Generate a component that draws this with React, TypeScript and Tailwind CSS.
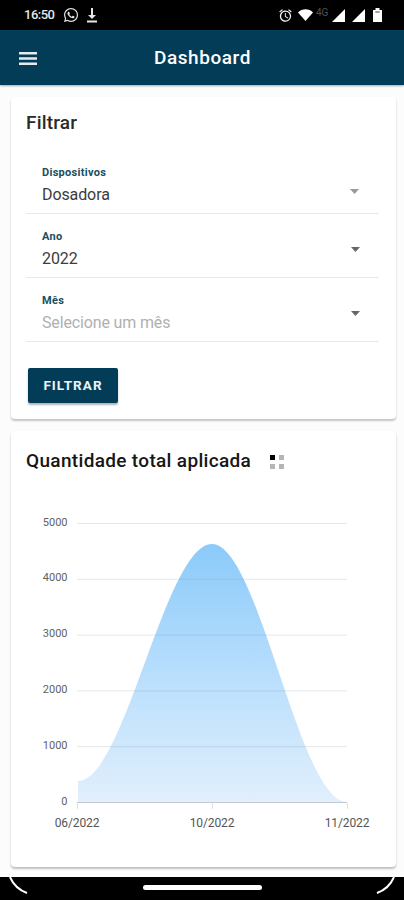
import { FaWhatsapp } from "react-icons/fa";
import { MdAlarm } from "react-icons/md";

const filters = [
    { label: "Dispositivos", value: "Dosadora", placeholder: false, disabled: true },
    { label: "Ano", value: "2022", placeholder: false, disabled: false },
    { label: "Mês", value: "Selecione um mês", placeholder: true, disabled: false },
];

const yTicks = [5000, 4000, 3000, 2000, 1000, 0];

const xTicks = [
    { label: "06/2022", x: 66 },
    { label: "10/2022", x: 201 },
    { label: "11/2022", x: 336 },
];

function StatusBar() {
    return (
        <div className="flex h-[30px] shrink-0 items-center bg-black pl-6 pr-[22px] text-white">
            <span className="w-[31px] whitespace-nowrap text-[13px] font-medium leading-4 tracking-[-0.5px] text-gray-200">16:50</span>
            <FaWhatsapp className="ml-2 size-4 text-gray-200" />
            <svg className="ml-[7px] h-4 w-3 text-gray-200" viewBox="0 0 12 16" fill="currentColor">
                <path d="M5 1h2v7h3l-4 4-4-4h3zM1 13.5h10v2H1z" />
            </svg>
            <div className="ml-auto flex items-center">
                <MdAlarm className="size-[15px] text-gray-100" />
                <svg className="ml-[5px] h-3 w-[15px]" viewBox="0 0 15 12" fill="white">
                    <path d="M0 3.5C4 -.8 11 -.8 15 3.5L7.5 12z" />
                </svg>
                <span className="ml-[3px] -mt-1 w-[15px] text-[10px] leading-3 text-neutral-600">4G</span>
                <svg className="ml-px h-[13px] w-[13px]" viewBox="0 0 13 13" fill="white">
                    <path d="M13 0v13H0z" />
                </svg>
                <svg className="ml-[7px] h-[13px] w-[13px]" viewBox="0 0 13 13" fill="white">
                    <path d="M13 0v13H0z" />
                </svg>
                <svg className="ml-2 h-[14px] w-[9px]" viewBox="0 0 9 14" fill="white">
                    <path d="M2.5 0h4v2H9v12H0V2h2.5z" />
                    <path d="M2.3 4h4.4" stroke="#444" />
                </svg>
            </div>
        </div>
    );
}

function FilterField({ label, value, placeholder, disabled }: (typeof filters)[number]) {
    return (
        <div className="flex h-16 items-center justify-between border-b border-[#e8e8e8] pl-4 pr-[19px]">
            <div className="pt-2">
                <div className="text-[11px] font-bold leading-[14px] tracking-[0.3px] text-[#174f61]">{label}</div>
                <div
                    className={
                        placeholder
                            ? "mt-[5px] text-[16px] leading-5 tracking-[-0.15px] text-[#b0b0b0]"
                            : "mt-[5px] text-[16px] leading-5 tracking-[-0.1px] text-[#3c3c3c]"
                    }
                >
                    {value}
                </div>
            </div>
            <svg
                className={disabled ? "mr-px mt-[19px] h-[5px] w-[9px] text-[#999]" : "mt-2 h-[5px] w-[9px] text-[#666]"}
                viewBox="0 0 10 5"
                preserveAspectRatio="none"
                fill="currentColor"
            >
                <path d="M0 0h10L5 5z" />
            </svg>
        </div>
    );
}

function AreaChart() {
    return (
        <svg className="block h-[385px] w-[385px]" viewBox="0 0 385 385">
            <defs>
                <linearGradient id="area" x1="0" y1="0" x2="0" y2="1">
                    <stop offset="0%" stopColor="#8bcafa" />
                    <stop offset="55%" stopColor="#bce0fd" />
                    <stop offset="100%" stopColor="#e1effc" />
                </linearGradient>
            </defs>
            <path d="M67 299C114 299 154 62 201 62C248 62 288 320 336 320H67z" fill="url(#area)" />
            {yTicks.map((tick, i) => (
                <g key={tick}>
                    <path
                        d={`M66 ${41.5 + i * 55.8}H336`}
                        stroke={tick === 0 ? "#c3c9cf" : "#7b8894"}
                        strokeOpacity={tick === 0 ? 1 : 0.2}
                    />
                    <text x="56.5" y={43.5 + i * 55.8} textAnchor="end" fontSize="11" fill="#626262">
                        {tick}
                    </text>
                </g>
            ))}
            {xTicks.map((tick) => (
                <g key={tick.label}>
                    <path d={`M${tick.x + 0.5} 321v6`} stroke="#dde1e5" />
                    <text x={tick.x} y="345" textAnchor="middle" fontSize="12" letterSpacing="-0.1" fill="#555">
                        {tick.label}
                    </text>
                </g>
            ))}
        </svg>
    );
}

export default function App() {
    return (
        <div className="flex h-[900px] w-[404px] flex-col overflow-hidden bg-[#fcfcfc] font-['Roboto',sans-serif]">
            <StatusBar />

            <header className="grid h-[55px] shrink-0 grid-cols-[1fr_auto_1fr] items-center bg-[#033c57] px-[19px] shadow-[0_1px_2px_rgba(0,0,0,0.35)]">
                <svg className="mt-0.5 h-[13px] w-[18px]" viewBox="0 0 18 13" fill="#e6eaed">
                    <path d="M0 0h18v2.5H0zM0 5.2h18v2.5H0zM0 10.4h18v2.5H0z" />
                </svg>
                <h1 className="pl-px text-[19px] font-medium leading-6 tracking-[0.55px] text-white">Dashboard</h1>
            </header>

            <main className="flex flex-1 flex-col gap-3 pl-[11px] pr-2 pt-3">
                {/* Filters */}
                <section className="h-[322px] rounded bg-white px-[15px] pt-[14px] shadow-[0_2px_2px_rgba(0,0,0,0.2),0_1px_3px_rgba(0,0,0,0.05)]">
                    <h2 className="text-[19px] font-medium leading-6 tracking-[0.2px] text-[#2a2a2a]">Filtrar</h2>
                    <div className="mt-[15px] pr-0.5">
                        {filters.map((f) => (
                            <FilterField key={f.label} {...f} />
                        ))}
                    </div>
                    <button className="ml-0.5 mt-[26px] h-[35px] w-[90px] rounded-[2px] bg-[#033c57] text-[13.5px] font-bold tracking-[1.05px] text-[#eef2f4] shadow-[0_2px_2px_rgba(0,0,0,0.3)]">
                        FILTRAR
                    </button>
                </section>

                {/* Chart */}
                <section className="h-[436px] rounded bg-white shadow-[0_2px_2px_rgba(0,0,0,0.22),0_1px_3px_rgba(0,0,0,0.05)]">
                    <div className="flex items-center px-[15px] pt-[18px]">
                        <h2 className="text-[19px] font-medium leading-6 tracking-[0.33px] text-[#161616]">Quantidade total aplicada</h2>
                        <div className="ml-auto mr-[97px] mt-0.5 grid grid-cols-2 gap-1">
                            <span className="size-[5px] bg-black" />
                            <span className="size-[5px] bg-[#b5b5b5]" />
                            <span className="size-[5px] bg-[#b5b5b5]" />
                            <span className="size-[5px] bg-[#b5b5b5]" />
                        </div>
                    </div>
                    <div className="mt-[9px]">
                        <AreaChart />
                    </div>
                </section>
            </main>

            {/* Gesture bar */}
            <footer className="flex h-[23px] shrink-0 items-start justify-between bg-black px-[9px]">
                <svg className="h-[18px] w-5" viewBox="0 0 20 18" fill="none" stroke="white" strokeWidth="2">
                    <path d="M1 0C4 7 10 13 18 16" />
                </svg>
                <div className="mt-2 h-[5px] w-[119px] rounded-full bg-white" />
                <svg className="h-[18px] w-5" viewBox="0 0 20 18" fill="none" stroke="white" strokeWidth="2">
                    <path d="M19 0C16 7 10 13 2 16" />
                </svg>
            </footer>
        </div>
    );
}
